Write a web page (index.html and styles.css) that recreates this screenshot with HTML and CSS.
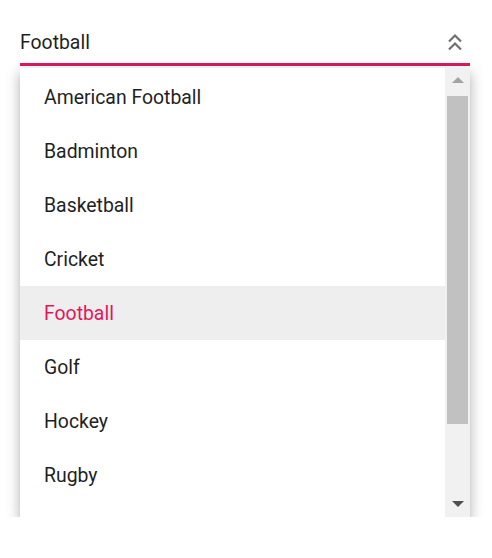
FILE: index.html
```html
<!DOCTYPE html>
<html lang="en">
<head>
    <meta charset="UTF-8">
    <title>Sports Dropdown</title>
    <link rel="stylesheet" href="styles.css">
</head>
<body>
    <div class="dropdown">
        <div class="input">
            <span class="value">Football</span>
            <svg class="icon" width="16" height="20" viewBox="0 0 16 20">
                <path d="M2 8.5 L8 2.5 L14 8.5" />
                <path d="M2 16.5 L8 10.5 L14 16.5" />
            </svg>
        </div>

        <div class="popup">
            <ul class="list">
                <li>American Football</li>
                <li>Badminton</li>
                <li>Basketball</li>
                <li>Cricket</li>
                <li class="active">Football</li>
                <li>Golf</li>
                <li>Hockey</li>
                <li>Rugby</li>
            </ul>
            <div class="scrollbar">
                <span class="arrow up"></span>
                <div class="track">
                    <div class="thumb"></div>
                </div>
                <span class="arrow down"></span>
            </div>
        </div>
    </div>
</body>
</html>
```

FILE: styles.css
```css
body {
    font-family: Roboto, "Liberation Sans", sans-serif;
    margin: 0;
    padding: 0;
    background-color: #fff;
    color: #212121;
}
.dropdown {
    width: 450px;
    margin: 26px 0 0 20px;
}
.input {
    display: flex;
    align-items: center;
    justify-content: space-between;
    height: 37px;
    padding-left: 0;
    border-bottom: 3px solid #d81b60;
}
.value {
    font-size: 19.4px;
    color: #1f1f1f;
    margin-top: -4px;
}
.icon {
    margin-right: 7px;
    margin-top: -4px;
}
.icon path {
    fill: none;
    stroke: #707070;
    stroke-width: 2.2;
}
.popup {
    display: flex;
    height: 449px;
    margin-top: 2px;
    background-color: #fff;
    overflow: hidden;
    box-shadow: 0 5px 5px -3px rgba(0, 0, 0, 0.2), 0 8px 10px 1px rgba(0, 0, 0, 0.14), 0 3px 14px 2px rgba(0, 0, 0, 0.12);
}
.list {
    flex: 1;
    list-style: none;
    margin: 0;
    padding: 0;
}
.list li {
    height: 54px;
    line-height: 56px;
    padding-left: 24px;
    font-size: 19.4px;
    color: #1f1f1f;
}
.list li:first-child {
    margin-top: 2px;
}
.list li.active {
    background-color: #eee;
    color: #e3165b;
}
.scrollbar {
    width: 25px;
    display: flex;
    flex-direction: column;
    align-items: center;
    background-color: #f1f1f1;
}
.arrow {
    width: 0;
    height: 0;
    border-left: 6px solid transparent;
    border-right: 6px solid transparent;
}
.arrow.up {
    margin-top: 9px;
    border-bottom: 6px solid #a3a3a3;
}
.arrow.down {
    margin-bottom: 10px;
    border-top: 6px solid #505050;
}
.track {
    flex: 1;
    width: 100%;
    padding: 13px 2px 0;
    box-sizing: border-box;
}
.thumb {
    height: 328px;
    background-color: #c1c1c1;
}
```
